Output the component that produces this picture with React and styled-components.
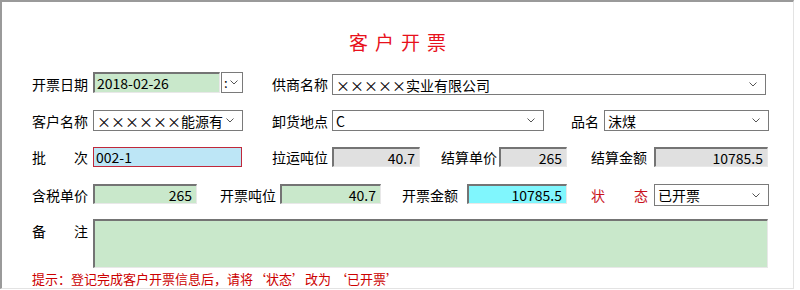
import React from "react"
import styled, { createGlobalStyle, css } from "styled-components"

const GlobalStyle = createGlobalStyle`
  html, body {
    margin: 0;
    padding: 0;
    background: #ffffff;
  }
  body {
    font-family: "Noto Sans CJK SC", "Liberation Sans", sans-serif;
    color: #000;
  }
`;

const Frame = styled.div`
  box-sizing: border-box;
  width: 794px;
  height: 289px;
  border-style: solid;
  border-width: 2px 1px 1px 2px;
  border-color: #9a9a9a #e3e3e3 #e3e3e3 #9a9a9a;
  background: #fff;
  overflow: hidden;
`;

const Title = styled.h1`
  margin: 0;
  padding-top: 29px;
  height: 22px;
  line-height: 22px;
  font-size: 19px;
  font-weight: 400;
  letter-spacing: 7px;
  text-indent: 7px;
  text-align: center;
  color: #e8111c;
`;

const Row = styled.div`
  display: flex;
  align-items: ${(p) => p.$align || "center"};
  padding-left: 30px;
  margin-top: ${(p) => p.$mt}px;
  height: ${(p) => p.$h}px;
`;

const Label = styled.span`
  flex: none;
  display: flex;
  justify-content: ${(p) => (p.$spread ? "space-between" : "flex-start")};
  width: ${(p) => p.$w || 56}px;
  margin-left: ${(p) => p.$ml || 0}px;
  margin-top: ${(p) => p.$mt || 0}px;
  font-size: 14px;
  line-height: 16px;
  white-space: nowrap;
  color: ${(p) => (p.$red ? "#c8101c" : "#000")};
`;

const sunken = css`
  border-style: solid;
  border-width: 2px 1px 1px 2px;
  border-color: #747474 #e8e8e8 #e8e8e8 #747474;
`;

const fills = {
  green: "#c9e8cb",
  gray: "#e0e0e0",
  cyan: "#80f6fd",
  blue: "#bde6f6",
};

const Box = styled.div`
  flex: none;
  box-sizing: border-box;
  display: flex;
  align-items: center;
  justify-content: ${(p) => (p.$right ? "flex-end" : "flex-start")};
  width: ${(p) => p.$w}px;
  height: ${(p) => p.$h || 20}px;
  margin-left: ${(p) => p.$ml || 0}px;
  margin-top: ${(p) => p.$mt || 0}px;
  padding: 0 ${(p) => (p.$right ? 4 : 2)}px 0 2px;
  background: ${(p) => fills[p.$fill] || "#fff"};
  font-size: 14px;
  line-height: 16px;
  white-space: nowrap;
  ${(p) => (p.$fill === "blue" ? "border: 1px solid #c0283a;" : sunken)}
`;

const Combo = styled.div`
  flex: none;
  box-sizing: border-box;
  display: flex;
  align-items: center;
  justify-content: space-between;
  width: ${(p) => p.$w}px;
  height: ${(p) => p.$h || 21}px;
  margin-left: ${(p) => p.$ml || 0}px;
  margin-top: ${(p) => p.$mt || 0}px;
  padding: 0 8px 0 3px;
  border: 1px solid #7a7a7a;
  background: #fff;
  font-size: 14px;
  line-height: 16px;
  white-space: nowrap;
`;

const ComboText = styled.span`
  flex: none;
`;

const PickerButton = styled.div`
  flex: none;
  box-sizing: border-box;
  display: flex;
  align-items: center;
  justify-content: space-between;
  width: 22px;
  height: 21px;
  margin-left: 1px;
  margin-top: -2px;
  padding: 0 4px 0 2px;
  border: 1px solid #7a7a7a;
  background: #fff;
  font-size: 13px;
  line-height: 14px;
`;

const Memo = styled.div`
  flex: none;
  box-sizing: border-box;
  width: 675px;
  height: 49px;
  margin-left: 5px;
  background: #c9e8cb;
  ${sunken}
`;

const Hint = styled.p`
  margin: 3px 0 0 30px;
  font-size: 13px;
  line-height: 15px;
  color: #cc0000;
  white-space: nowrap;
`;

const Chevron = () => (
  <svg width="8" height="5" viewBox="0 0 8 5" style={{ flex: "none" }}>
    <polyline points="0.5,0.5 4,4 7.5,0.5" fill="none" stroke="#555" strokeWidth="1" />
  </svg>
)

export default function App() {
  return (
    <>
      <GlobalStyle />
      <Frame>
        <Title>客户开票</Title>

        <Row $mt={19} $h={23}>
          <Label>开票日期</Label>
          <Box $w={127} $h={21} $ml={5} $mt={-2} $fill="green">2018-02-26</Box>
          <PickerButton>
            <span>:</span>
            <Chevron />
          </PickerButton>
          <Label $ml={29}>供商名称</Label>
          <Combo $w={434} $ml={4} $mt={2}>
            <ComboText>×××××实业有限公司</ComboText>
            <Chevron />
          </Combo>
        </Row>

        <Row $mt={15} $h={21}>
          <Label>客户名称</Label>
          <Combo $w={150} $ml={5}>
            <ComboText>××××××能源有</ComboText>
            <Chevron />
          </Combo>
          <Label $ml={29}>卸货地点</Label>
          <Combo $w={212} $ml={4}>
            <ComboText>C</ComboText>
            <Chevron />
          </Combo>
          <Label $w={28} $ml={27}>品名</Label>
          <Combo $w={165} $ml={5}>
            <ComboText>沫煤</ComboText>
            <Chevron />
          </Combo>
        </Row>

        <Row $mt={16} $h={20}>
          <Label $spread><span>批</span><span>次</span></Label>
          <Box $w={149} $ml={5} $fill="blue">002-1</Box>
          <Label $ml={30}>拉运吨位</Label>
          <Box $w={88} $ml={4} $fill="gray" $right>40.7</Box>
          <Label $ml={21}>结算单价</Label>
          <Box $w={68} $ml={2} $fill="gray" $right>265</Box>
          <Label $ml={24}>结算金额</Label>
          <Box $w={114} $ml={7} $fill="gray" $right>10785.5</Box>
        </Row>

        <Row $mt={17} $h={22}>
          <Label>含税单价</Label>
          <Box $w={104} $ml={5} $mt={-2} $fill="green" $right>265</Box>
          <Label $ml={23}>开票吨位</Label>
          <Box $w={101} $ml={4} $mt={-2} $fill="green" $right>40.7</Box>
          <Label $ml={21}>开票金额</Label>
          <Box $w={100} $ml={9} $mt={-2} $fill="cyan" $right>10785.5</Box>
          <Label $w={57} $ml={24} $red $spread><span>状</span><span>态</span></Label>
          <Combo $w={115} $h={22} $ml={6}>
            <ComboText>已开票</ComboText>
            <Chevron />
          </Combo>
        </Row>

        <Row $mt={13} $h={49} $align="flex-start">
          <Label $spread $mt={4}><span>备</span><span>注</span></Label>
          <Memo />
        </Row>

        <Hint>提示：登记完成客户开票信息后，请将‘状态’改为 ‘已开票’</Hint>
      </Frame>
    </>
  )
}
